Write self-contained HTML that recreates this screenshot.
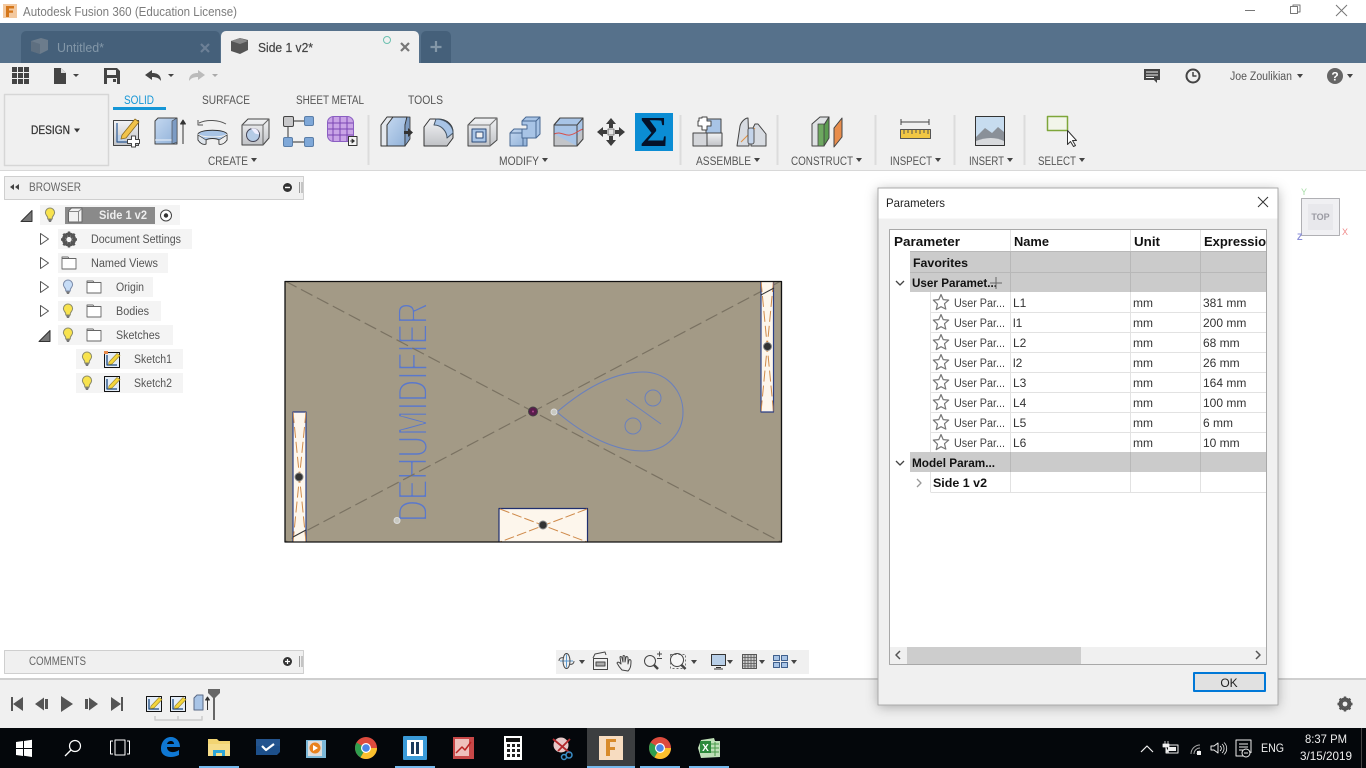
<!DOCTYPE html>
<html><head><meta charset="utf-8"><title>Autodesk Fusion 360</title>
<style>
html,body{margin:0;padding:0;background:#fff;width:1366px;height:768px;overflow:hidden}
svg{display:block;font-family:"Liberation Sans",sans-serif}
.r{font-size:11.5px;fill:#555}
.b{font-size:11.5px;fill:#555}
.h{font-size:13px;font-weight:bold;fill:#111}
</style></head><body>
<svg width="1366" height="768" viewBox="0 0 1366 768" xmlns="http://www.w3.org/2000/svg" stroke-linejoin="round">
<defs>
<filter id="sh" x="-10%" y="-10%" width="120%" height="120%"><feDropShadow dx="0" dy="2" stdDeviation="6" flood-color="#000" flood-opacity=".3"/></filter>
<clipPath id="tc"><rect x="890" y="230" width="377" height="434"/></clipPath>
<clipPath id="dc"><rect x="285" y="281" width="497" height="261"/></clipPath>
<clipPath id="pl"><rect x="293" y="412" width="13" height="130"/></clipPath>
<clipPath id="pr"><rect x="761" y="281" width="12.500" height="131"/></clipPath>
<linearGradient id="blu" x1="0" y1="0" x2="1" y2="1"><stop offset="0" stop-color="#c4d8f0"/><stop offset="1" stop-color="#8fb0d8"/></linearGradient>
<linearGradient id="gry" x1="0" y1="0" x2="0" y2="1"><stop offset="0" stop-color="#f2f3f5"/><stop offset="1" stop-color="#c0c2c6"/></linearGradient>
<symbol id="bulb" viewBox="0 0 12 16" width="12" height="16"><path d="M6 1a4.600 4.600 0 0 0-4.600 4.600c0 2 1.600 3 2.300 4.800v1.600h4.600v-1.600c.7-1.800 2.300-2.800 2.300-4.800A4.600 4.600 0 0 0 6 1z" fill="#f8e34e" stroke="#8a8a6a"/><path d="M4 12.500h4l-1 2.500H5z" fill="#777"/></symbol>
<symbol id="bulbb" viewBox="0 0 12 16" width="12" height="16"><path d="M6 1a4.600 4.600 0 0 0-4.600 4.600c0 2 1.600 3 2.300 4.800v1.600h4.600v-1.600c.7-1.800 2.300-2.800 2.300-4.800A4.600 4.600 0 0 0 6 1z" fill="#c6dcf6" stroke="#7a8aa8"/><path d="M4 12.500h4l-1 2.500H5z" fill="#777"/></symbol>
<symbol id="fold" viewBox="0 0 16 14" width="16" height="14"><path d="M1 2.500h14v10.500H1zM1 2.500V1h6l1 1.500" fill="#fff" stroke="#666" stroke-width=".9"/></symbol>
<symbol id="star" viewBox="0 0 18 18" width="18" height="18"><path d="M9 1.500l2.200 5.100 5.500.5-4.200 3.600 1.300 5.400L9 13.700l-4.800 2.900 1.300-5.400L1.300 7.100l5.500-.5z" fill="#fff" stroke="#777" stroke-width="1.200"/></symbol>
<symbol id="sk" viewBox="0 0 17 17" width="17" height="17"><rect x=".5" y="1.500" width="15" height="15" fill="#e4edf7" stroke="#111"/><path d="M3 4v10h10" fill="none" stroke="#1b4a80" stroke-width="1.300"/><path d="M5 11L13 2.500l3 2L8 13l-3.500.5z" fill="#f4d63c" stroke="#a08a30" stroke-width=".7"/></symbol>
</defs>

<!-- base -->
<rect width="1366" height="768" fill="#fff"/>
<!-- title bar -->
<rect x="3" y="4" width="14" height="14" fill="#f3c9a0"/><path d="M6 6h8v2.500H9v2h4v2.300H9V17H6z" fill="#d4761a"/>
<text x="23" y="16" font-size="12.500" fill="#7c7c7c" textLength="214" lengthAdjust="spacingAndGlyphs">Autodesk Fusion 360 (Education License)</text>
<path d="M1245 10.500h10" stroke="#777" stroke-width="1"/>
<path d="M1290.500 6.500h7v7h-7z M1293 6.500V5h7v7h-2.500" fill="none" stroke="#777"/>
<path d="M1336 5l11 11M1347 5l-11 11" stroke="#777" stroke-width="1"/>

<!-- tab bar -->
<rect y="23" width="1366" height="40" fill="#56718b"/>
<path d="M21 63V36a5 5 0 0 1 5-5h189a5 5 0 0 1 5 5v27z" fill="#45607a"/>
<path d="M221 63V36a5 5 0 0 1 5-5h188a5 5 0 0 1 5 5v27z" fill="#f0f0f0"/>
<path d="M421 63V36a5 5 0 0 1 5-5h20a5 5 0 0 1 5 5v27z" fill="#45607a"/>
<path d="M31 41l10-3 7 2v10l-8 4-9-3z" fill="#6c7c8c"/><path d="M31 41l9 3v10l-9-3z" fill="#5e6f80"/>
<text x="57" y="52" font-size="12.500" fill="#8397a8" textLength="47" lengthAdjust="spacingAndGlyphs">Untitled*</text>
<path d="M201 44l8 8M209 44l-8 8" stroke="#6c8096" stroke-width="2.200"/>
<path d="M231 41l9-3 8 2v10l-8 4-9-3z" fill="#555"/><path d="M231 41l9 3 8-3-8-3z" fill="#888"/>
<text x="258" y="52" font-size="12.500" fill="#444" stroke="#444" stroke-width=".2" textLength="55" lengthAdjust="spacingAndGlyphs">Side 1 v2*</text>
<circle cx="387" cy="40" r="3.500" fill="none" stroke="#6cc0b0" stroke-width="1"/>
<path d="M401 43l8 8M409 43l-8 8" stroke="#777" stroke-width="2.200"/>
<path d="M436 41v11M430.500 47h11" stroke="#8397a8" stroke-width="2.200"/>

<!-- toolbar -->
<rect y="63" width="1366" height="107" fill="#f0f0f0"/>
<rect y="170" width="1366" height="1" fill="#d8d8d8"/>
<g fill="#444"><rect x="12" y="67" width="5" height="5"/><rect x="18" y="67" width="5" height="5"/><rect x="24" y="67" width="5" height="5"/><rect x="12" y="73" width="5" height="5"/><rect x="18" y="73" width="5" height="5"/><rect x="24" y="73" width="5" height="5"/><rect x="12" y="79" width="5" height="5"/><rect x="18" y="79" width="5" height="5"/><rect x="24" y="79" width="5" height="5"/></g>
<path d="M54 68h7l5 5v11H54z" fill="#444"/><path d="M61 68v5h5" fill="#ddd"/>
<path d="M73 74h6l-3 3z" fill="#444"/>
<path d="M104 68h13l3 3v13h-16z" fill="#444"/><rect x="107" y="70" width="9" height="5" fill="#f0f0f0"/><rect x="107" y="78" width="10" height="6" fill="#f0f0f0"/><rect x="113" y="79" width="3" height="3" fill="#444"/>
<path d="M145 75l7-5v3c4 0 9 1 9 8-2-3-5-4-9-4v3z" fill="#444"/><path d="M168 74h6l-3 3z" fill="#444"/>
<path d="M205 75l-7-5v3c-4 0-9 1-9 8 2-3 5-4 9-4v3z" fill="#bbb"/><path d="M212 74h6l-3 3z" fill="#aaa"/>

<path d="M1144 69h16v11h-3v3l-3-3h-10z" fill="#444"/><path d="M1146 72h12M1146 75h12M1146 77.500h8" stroke="#f0f0f0" stroke-width="1"/>
<circle cx="1193" cy="76" r="6.500" fill="none" stroke="#444" stroke-width="2"/><path d="M1193 72v4h3.500" fill="none" stroke="#444" stroke-width="1.500"/>
<text x="1230" y="80" font-size="11.500" fill="#555" textLength="62" lengthAdjust="spacingAndGlyphs">Joe Zoulikian</text>
<path d="M1297 74h6l-3 4z" fill="#444"/>
<circle cx="1335" cy="76" r="8" fill="#666"/><text x="1335" y="80.500" font-size="12" font-weight="bold" fill="#fff" text-anchor="middle">?</text>
<path d="M1347 74h6l-3 4z" fill="#444"/>

<!-- design -->
<rect x="4.500" y="94.500" width="104" height="71" fill="#f0f0f0" stroke="#d6d6d6" stroke-width="1.500"/>
<text x="31" y="134" font-size="11.500" fill="#333" stroke="#333" stroke-width=".25" textLength="39" lengthAdjust="spacingAndGlyphs">DESIGN</text>
<path d="M74 128.500h6l-3 4z" fill="#333"/>

<!-- ribbon tabs -->
<text x="124" y="104" font-size="11.500" fill="#1596d6" textLength="30" lengthAdjust="spacingAndGlyphs">SOLID</text>
<rect x="113" y="107" width="53" height="3" fill="#1596d6"/>
<text x="202" y="104" class="r" textLength="48" lengthAdjust="spacingAndGlyphs">SURFACE</text>
<text x="296" y="104" class="r" textLength="68" lengthAdjust="spacingAndGlyphs">SHEET METAL</text>
<text x="408" y="104" class="r" textLength="35" lengthAdjust="spacingAndGlyphs">TOOLS</text>

<!-- group labels -->
<g>
<text x="208" y="165" class="b" textLength="40" lengthAdjust="spacingAndGlyphs">CREATE</text><path d="M251 158h6l-3 4z" fill="#444"/>
<text x="499" y="165" class="b" textLength="40" lengthAdjust="spacingAndGlyphs">MODIFY</text><path d="M542 158h6l-3 4z" fill="#444"/>
<text x="696" y="165" class="b" textLength="55" lengthAdjust="spacingAndGlyphs">ASSEMBLE</text><path d="M754 158h6l-3 4z" fill="#444"/>
<text x="791" y="165" class="b" textLength="62" lengthAdjust="spacingAndGlyphs">CONSTRUCT</text><path d="M856 158h6l-3 4z" fill="#444"/>
<text x="890" y="165" class="b" textLength="42" lengthAdjust="spacingAndGlyphs">INSPECT</text><path d="M935 158h6l-3 4z" fill="#444"/>
<text x="969" y="165" class="b" textLength="35" lengthAdjust="spacingAndGlyphs">INSERT</text><path d="M1007 158h6l-3 4z" fill="#444"/>
<text x="1038" y="165" class="b" textLength="38" lengthAdjust="spacingAndGlyphs">SELECT</text><path d="M1079 158h6l-3 4z" fill="#444"/>
</g>
<g fill="#dcdcdc"><rect x="367.500" y="115" width="2" height="50"/><rect x="679.500" y="115" width="2" height="50"/><rect x="776.500" y="115" width="2" height="50"/><rect x="874.500" y="115" width="2" height="50"/><rect x="953.500" y="115" width="2" height="50"/><rect x="1023.500" y="115" width="2" height="50"/></g>

<!-- CREATE icons -->
<rect x="113.500" y="120.500" width="25" height="25" fill="url(#gry)" stroke="#444"/>
<path d="M117 123v19h13" fill="none" stroke="#2a5a96" stroke-width="1.200"/><rect x="118" y="135" width="6" height="6" fill="#bcd2ec"/>
<path d="M122 135l13-16 4 3-13 16-5 1z" fill="#f1c34a" stroke="#8c6a1e" stroke-width=".8"/>
<path d="M131.500 136h4v3.500h4v4h-4v3.500h-4v-3.500h-4v-4h4z" fill="#fff" stroke="#444"/>
<path d="M155 121l3-3h19v26h-22z" fill="url(#blu)" stroke="#444"/><path d="M155 140h17" stroke="#eef3fa" fill="none"/><path d="M172 144l5-2V118l-5 3z" fill="#7d9cc4" stroke="#444" stroke-width=".6"/>
<path d="M183 144v-23M180.500 124l2.500-4 2.500 4z" stroke="#333" fill="#333"/>
<path d="M199 123c8-4 20-3 27 1M198 120v5h5" fill="none" stroke="#555" stroke-width="1"/>
<path d="M198 134c2-5 27-5 29 0v6c-2 3-6 5-8 4v-4c-3-2-10-2-13 0v4c-3 1-6-1-8-4z" fill="#a8c4e6" stroke="#333" stroke-width="1"/><path d="M198 134c3 4 26 4 29 0" fill="none" stroke="#eee"/><path d="M219 140l8-5v5c-2 3-5 5-8 4z" fill="#eee" stroke="#333" stroke-width=".7"/><path d="M198 135v5c2 3 5 5 8 4v-4z" fill="#dfe5ec" stroke="#333" stroke-width=".7"/>
<path d="M242 125l6-6h21v19l-6 7h-21z" fill="url(#gry)" stroke="#444"/><path d="M263 145v-20l6-6M263 125h-21" fill="none" stroke="#666"/><circle cx="253" cy="135" r="6.500" fill="#b5cbe6" stroke="#445"/><path d="M251 128.500a6 6 0 0 1 8 6l-4-1z" fill="#eef"/>
<path d="M293 121h11M288 126v11M293 142h11" stroke="#555" stroke-width="1.200"/>
<rect x="283.500" y="116.500" width="10" height="10" rx="1.500" fill="#c8c8ca" stroke="#444"/><rect x="304.500" y="116.500" width="9" height="9" rx="1.500" fill="#7fa8d8" stroke="#5a7ea8"/><rect x="283.500" y="137.500" width="9" height="9" rx="1.500" fill="#7fa8d8" stroke="#5a7ea8"/><rect x="304.500" y="137.500" width="9" height="9" rx="1.500" fill="#7fa8d8" stroke="#5a7ea8"/>
<rect x="327.500" y="116.500" width="26" height="25" rx="6" fill="#c9a4e6" stroke="#8a5ec2"/><path d="M333 117v24M340 117v24M347 117v24M328 123h25M328 129h25M328 135h25" stroke="#7a46b4" stroke-width="1"/>
<rect x="348.500" y="136.500" width="8.500" height="9" fill="#f4f4f4" stroke="#333"/><path d="M350 141h3M352 139l2.500 2-2.500 2z" stroke="#333" fill="#333" stroke-width=".8"/>

<!-- MODIFY -->
<path d="M381 125l6-8h20l-2 8v21h-24z" fill="#e4e8ee" stroke="#333"/><path d="M387 125l6-8h14l-2 8v21h-18z" fill="url(#blu)" stroke="#333"/><path d="M405 125v21l5-7v-22l-3 0z" fill="#7e9cc2" stroke="#333" stroke-width=".8"/><path d="M404 131h4v-3l5 4.500-5 4.500v-3h-4z" fill="#333"/>
<path d="M424 127l6-8h8c9 0 15 6 15 13v6l-6 8h-23z" fill="url(#gry)" stroke="#333"/><path d="M436 119c10 0 17 7 17 14l-6 5c0-6-5-13-13-13z" fill="#a8c4e6" stroke="#456"/>
<path d="M468 125l7-7h22v22l-7 6h-22z" fill="url(#gry)" stroke="#444"/><path d="M490 146v-21l7-7M490 125h-22" fill="none" stroke="#777"/><rect x="472" y="129" width="14" height="13" fill="#a8c4e6" stroke="#2c4a78"/><rect x="476" y="132" width="7" height="6" fill="#f0f0f0" stroke="#2c4a78"/>
<path d="M510 133l4-4h13v17h-17z" fill="url(#blu)" stroke="#4a6a94"/><path d="M510 133h13v13M523 133l4-4" fill="none" stroke="#4a6a94"/>
<path d="M522 121l4-4h14v17l-4 4h-14v-9h5v-4h-5z" fill="#a8c4e6" stroke="#4a6a94"/><path d="M522 121h14v17M536 121l4-4" fill="none" stroke="#4a6a94"/>
<path d="M554 125l6-7h23v21l-6 7h-23z" fill="#a8c4e6" stroke="#444"/><path d="M554 134v12h23v-9l6-8v10l-6 7z" fill="#c2c4c8"/><path d="M554 125h23v21M577 125l6-7" fill="none" stroke="#444"/><path d="M554 134c8-3 10 2 16 1s7-4 13-6" fill="none" stroke="#d8504a" stroke-width="1"/><path d="M554 125l6-7h23v21l-6 7h-23z" fill="none" stroke="#444"/>
<path d="M611 118l5 6h-3v4h-4v-4h-3zM611 146l5-6h-3v-4h-4v4h-3zM597 132l6-5v3h4v4h-4v3zM625 132l-6-5v3h-4v4h4v3z" fill="#3c3c3c"/><rect x="608" y="129" width="6" height="6" fill="#e4e4e4" stroke="#555" stroke-width=".8"/>
<rect x="635" y="113" width="38" height="38" fill="#0b8dd4"/>
<text x="654" y="146" font-size="42" font-family="'Liberation Serif',serif" font-weight="bold" fill="#04122a" text-anchor="middle">Σ</text>

<!-- ASSEMBLE -->
<path d="M706 133v-14h15v14z" fill="#a8c4e6" stroke="#444"/><path d="M693 133h14v13h-14z" fill="#d4d6da" stroke="#444"/><path d="M707 133h15v13h-15z" fill="url(#gry)" stroke="#444"/><path d="M699 118h3v-1h5v4h4v5h-4v4h-5v-4h-4v-5h1z" fill="#fff" stroke="#444"/>
<path d="M737 146l3-20c1-4 5-8 8-8l1 28h-6zM751 146v-14l4-8h3l8 10v12h-8z" fill="#d8dce2" stroke="#444"/><path d="M741 142c4-4 8-8 14-14" stroke="#e09040" fill="none"/><rect x="748" y="128" width="6" height="16" rx="2" fill="#c4d4ea" stroke="#555"/>

<!-- CONSTRUCT -->
<path d="M812 124l8-7h9l-5 8v21h-12z" fill="#dfe2e4" stroke="#444"/><path d="M824 125l5-8v21l-5 8z" fill="#5b9c50" stroke="#444"/><path d="M818 124h6v22h-6z" fill="#6ea860" stroke="#444" stroke-width=".8"/><path d="M834 128l8-10v19l-8 10z" fill="#e88d4c" stroke="#444"/>

<!-- INSPECT -->
<path d="M901 122h28M901 119v6M929 119v6" stroke="#444" fill="none"/><rect x="900.500" y="129.500" width="30" height="9" fill="#f2c744" stroke="#555"/><path d="M904 130v4M908 130v3M912 130v4M916 130v3M920 130v4M924 130v3M928 130v4" stroke="#555"/>

<!-- INSERT -->
<rect x="975.500" y="116.500" width="29" height="29" fill="#c7dcef" stroke="#333"/><path d="M976 137l9-9 7 5 6-6 6 5v13h-28z" fill="#8a9098"/><path d="M976 141c10-4 20-4 28 0v4h-28z" fill="#d8dadd"/>

<!-- SELECT -->
<rect x="1047.500" y="116.500" width="20" height="14" fill="#f2f5ea" stroke="#7ea63a" stroke-width="1.500"/>
<path d="M1067.500 130.500v14l3-3 3 5 2-1-3-5h4z" fill="#fff" stroke="#333" stroke-width="1"/>

<!-- BROWSER -->
<rect x="4.500" y="176.500" width="299" height="23" fill="#f0f0f0" stroke="#cfcfcf"/>
<path d="M14 184v6l-4-3zM19 184v6l-4-3z" fill="#444"/>
<text x="29" y="191" font-size="11.500" fill="#666" textLength="52" lengthAdjust="spacingAndGlyphs">BROWSER</text>
<circle cx="287.500" cy="187.500" r="4.500" fill="#333"/><rect x="285" y="186.800" width="5" height="1.400" fill="#fff"/>
<path d="M299.500 182v11M302 182v11" stroke="#999"/>

<!-- tree -->
<g fill="#f4f4f4">
<rect x="40" y="205" width="140" height="20"/><rect x="58" y="229" width="134" height="20"/><rect x="58" y="253" width="110" height="20"/><rect x="58" y="277" width="95" height="20"/><rect x="58" y="301" width="103" height="20"/><rect x="58" y="325" width="115" height="20"/><rect x="76" y="349" width="107" height="20"/><rect x="76" y="373" width="107" height="20"/>
</g>
<path d="M21 221.500l11-11v11z" fill="#777" stroke="#333"/>
<use href="#bulb" x="44" y="207"/>
<rect x="65" y="207" width="90" height="17" fill="#8a8a8a"/>
<path d="M68.500 211l3-3h10.500v14h-13.500z" fill="#f2f2f2" stroke="#666"/><path d="M78.500 222v-10.500l3.500-3M68.500 211.500h10" fill="none" stroke="#888"/>
<text x="99" y="219" font-size="11.500" font-weight="bold" fill="#eee" textLength="48" lengthAdjust="spacingAndGlyphs">Side 1 v2</text>
<circle cx="166" cy="215.500" r="5.500" fill="#fff" stroke="#444"/><circle cx="166" cy="215.500" r="2.200" fill="#333"/>

<path d="M40.500 233.500l8 5.500-8 5.500z" fill="#fff" stroke="#555"/>
<g transform="translate(69 239.500)"><circle r="5.500" fill="none" stroke="#555" stroke-width="3"/><path d="M0-8V8M-8 0H8M-5.700-5.700L5.700 5.700M-5.700 5.700L5.700-5.700" stroke="#555" stroke-width="2.400"/><circle r="2.600" fill="#f4f4f4"/></g>
<text x="91" y="243" class="r" textLength="90" lengthAdjust="spacingAndGlyphs">Document Settings</text>

<path d="M40.500 257.500l8 5.500-8 5.500z" fill="#fff" stroke="#555"/>
<use href="#fold" x="61" y="256"/>
<text x="91" y="267" class="r" textLength="67" lengthAdjust="spacingAndGlyphs">Named Views</text>

<path d="M40.500 281.500l8 5.500-8 5.500z" fill="#fff" stroke="#555"/>
<use href="#bulbb" x="62" y="279"/><use href="#fold" x="86" y="280"/>
<text x="116" y="291" class="r" textLength="28" lengthAdjust="spacingAndGlyphs">Origin</text>

<path d="M40.500 305.500l8 5.500-8 5.500z" fill="#fff" stroke="#555"/>
<use href="#bulb" x="62" y="303"/><use href="#fold" x="86" y="304"/>
<text x="116" y="315" class="r" textLength="33" lengthAdjust="spacingAndGlyphs">Bodies</text>

<path d="M39 341.500l11-11v11z" fill="#777" stroke="#333"/>
<use href="#bulb" x="62" y="327"/><use href="#fold" x="86" y="328"/>
<text x="116" y="339" class="r" textLength="44" lengthAdjust="spacingAndGlyphs">Sketches</text>

<use href="#bulb" x="81" y="351"/><use href="#sk" x="104" y="351"/><path d="M104 351h4v3h-4z" fill="#e88a4a"/>
<text x="134" y="363" class="r" textLength="38" lengthAdjust="spacingAndGlyphs">Sketch1</text>
<use href="#bulb" x="81" y="375"/><use href="#sk" x="104" y="375"/>
<text x="134" y="387" class="r" textLength="38" lengthAdjust="spacingAndGlyphs">Sketch2</text>

<!-- DRAWING -->
<g clip-path="url(#dc)">
<rect x="285" y="281" width="497" height="261" fill="#a39a86"/>
<text transform="translate(427 522) rotate(-90)" font-size="42" fill="#5a78cc" stroke="#a39a86" stroke-width="1.900" textLength="220" lengthAdjust="spacingAndGlyphs">DEHUMIDIFIER</text>
<path d="M285 281L781 542M781 281L285 542" stroke="#7a7262" stroke-width="1.200" stroke-dasharray="13 5" fill="none"/>
<path d="M557 412C585 388 615 372 643 372C668 372 683 392 683 412C683 432 668 451 643 451C615 451 585 436 557 412Z" fill="none" stroke="#6a80bd" stroke-width="1.100"/>
<circle cx="653" cy="398" r="8" fill="none" stroke="#6a80bd"/><circle cx="633" cy="426" r="8" fill="none" stroke="#6a80bd"/><path d="M626 399L661 424" stroke="#6a80bd"/>

<rect x="293" y="412" width="13" height="132" fill="#fdf6ec" stroke="#2b3f86" stroke-width="1.200"/>
<g clip-path="url(#pl)"><path d="M293 412L306 542M306 412L293 542" stroke="#cf8a4a" stroke-width="1" stroke-dasharray="11 4" fill="none"/></g>
<path d="M293 537l13-7" stroke="#333"/>
<circle cx="299" cy="477" r="4" fill="#333" stroke="#888"/>

<rect x="761" y="279" width="12.500" height="133" fill="#fdf6ec" stroke="#2b3f86" stroke-width="1.200"/>
<g clip-path="url(#pr)"><path d="M761 281L773.500 412M773.500 281L761 412" stroke="#cf8a4a" stroke-width="1" stroke-dasharray="11 4" fill="none"/></g>
<path d="M761 295l13-7" stroke="#333"/>
<circle cx="767.500" cy="346.500" r="4" fill="#333" stroke="#888"/>

<rect x="499" y="508.500" width="88.500" height="36" fill="#fdf6ec" stroke="#1f2f70" stroke-width="1.200"/>
<path d="M500 509L587 542M587 509L500 542" stroke="#cf8a4a" stroke-width="1" stroke-dasharray="10 3" fill="none"/>
<circle cx="543" cy="525" r="4" fill="#333" stroke="#888"/>
</g>
<rect x="285" y="281.500" width="496.500" height="260.500" fill="none" stroke="#111" stroke-width="1.300"/>
<circle cx="533" cy="411.500" r="4.500" fill="#5a1c4c" stroke="#444"/><circle cx="533" cy="411.500" r="1" fill="#b04890"/>
<circle cx="554" cy="412" r="3" fill="#c8c8c0" stroke="#ddd"/>
<circle cx="397" cy="520.500" r="3" fill="#c8c8c0" stroke="#ddd"/>

<!-- view cube -->
<rect x="1301.500" y="198.500" width="38" height="37" fill="#f0f0f3" stroke="#b0b0b4"/>
<rect x="1308" y="204" width="25" height="26" fill="#e8e8ec"/>
<text x="1320.500" y="220" font-size="9" font-weight="bold" fill="#9a9aa2" text-anchor="middle">TOP</text>
<text x="1301" y="195" font-size="9" fill="#a6dca6">Y</text>
<text x="1297" y="240" font-size="9" font-weight="bold" fill="#8a8ed8">Z</text>
<text x="1342" y="235" font-size="9" fill="#f08a8a">X</text>

<!-- nav bar -->
<rect x="556" y="650" width="253" height="24" fill="#f0f0f0"/>
<g fill="none" stroke="#444" stroke-width="1">
<path d="M560 661h13M566.500 654.500v13" stroke="#5b9ad0"/><ellipse cx="566.500" cy="661" rx="3.500" ry="7.500"/><path d="M559 661c0-3 3-4 5-3M574 661c0 3-3 4-5 3" stroke="#555"/>
<rect x="593.500" y="658.500" width="14" height="11"/><path d="M593 658l2-4 10-2 1 3"/><rect x="596" y="662" width="9" height="4" fill="#aaa"/>
<path d="M622 670c-2-2-4-5-5-7 1-2 3 0 4 1l-1-7c1-1 2 0 2 1l1 4 0-6c1-1 2 0 2 1v5l1-5c1-1 2 0 2 1v6l1-4c1-1 2 0 2 1 0 6-1 8-3 10z"/>
<circle cx="650" cy="661" r="5.500"/><path d="M654 665l4 4" stroke-width="2.500"/><path d="M657 654h5M659.500 651.500v5M657 658.500h5" stroke-width=".9"/>
<circle cx="677" cy="660" r="6.500" fill="#f6f6f6"/><path d="M681.500 665l4 4" stroke-width="2.500"/><rect x="670.500" y="654.500" width="15" height="14" stroke-dasharray="2 2" stroke-width=".7"/>
</g>
<rect x="711.500" y="654.500" width="14" height="11" fill="#b8cfe8" stroke="#333"/><path d="M716 667.500h5M714 669h9" stroke="#333"/>
<rect x="742.500" y="654.500" width="14" height="14" fill="#ccc" stroke="#555"/><path d="M745 655v13M748 655v13M751 655v13M754 655v13M743 657.500h13M743 660.500h13M743 663.500h13M743 666h13" stroke="#555" stroke-width=".8"/>
<g fill="#a8c4e6" stroke="#3f5f8c"><rect x="773.500" y="655.500" width="6" height="5"/><rect x="781.500" y="655.500" width="6" height="5"/><rect x="773.500" y="662.500" width="6" height="5"/><rect x="781.500" y="662.500" width="6" height="5"/></g>
<g fill="#444"><path d="M579 660h6l-3 4zM691 660h6l-3 4zM727 660h6l-3 4zM759 660h6l-3 4zM791 660h6l-3 4z"/></g>

<!-- comments -->
<rect x="4.500" y="650.500" width="299" height="23" fill="#f0f0f0" stroke="#cfcfcf"/>
<text x="29" y="665" font-size="11.500" fill="#666" textLength="57" lengthAdjust="spacingAndGlyphs">COMMENTS</text>
<circle cx="287.500" cy="661.500" r="4.500" fill="#333"/><path d="M285 661.500h5M287.500 659v5" stroke="#fff" stroke-width="1.200"/>
<path d="M299.500 656v11M302 656v11" stroke="#999"/>

<!-- timeline -->
<rect y="678" width="1366" height="2" fill="#cfcfcf"/>
<rect y="680" width="1366" height="48" fill="#f0f0f0"/>
<g fill="#555">
<rect x="11" y="697" width="2" height="14"/><path d="M23 697v14l-10-7z"/>
<path d="M35 704l9-6.500v13zM45 699h3v10h-3z"/>
<path d="M61 696l12 8-12 8z"/>
<path d="M98 704l-9-6.500v13zM85 699h3v10h-3z"/>
<path d="M111 697l10 7-10 7z"/><rect x="121" y="697" width="2" height="14"/>
</g>
<use href="#sk" x="146" y="695"/><use href="#sk" x="170" y="695"/>
<path d="M194 698l3-3h6v15h-9z" fill="#a8c4e6" stroke="#5a6a86"/><path d="M207.500 710v-12M205.500 700l2-3 2 3z" stroke="#333" fill="#333"/>
<path d="M155 716v4h47v-4M178 716v4" fill="none" stroke="#ccc" stroke-width="1.500"/>
<path d="M208 689h12v4l-6 6-6-6z" fill="#666"/><rect x="213" y="696" width="2" height="24" fill="#666"/>
<g transform="translate(1345 704)"><circle r="5" fill="none" stroke="#555" stroke-width="3"/><path d="M0-7.500V7.500M-7.500 0H7.500M-5.300-5.300L5.300 5.300M-5.300 5.300L5.300-5.300" stroke="#555" stroke-width="2.400"/><circle r="2.400" fill="#f0f0f0"/></g>

<!-- taskbar -->
<rect y="728" width="1366" height="40" fill="#04070b"/>
<g fill="#fff"><path d="M16 742l7-1v7h-7zM24 741l8-1.300V748h-8zM16 749h7v7l-7-1zM24 749h8v8l-8-1.300z"/></g>
<circle cx="75" cy="746" r="5.500" fill="none" stroke="#fff" stroke-width="1.200"/><path d="M71 750l-6 6" stroke="#fff" stroke-width="1.300"/>
<path d="M113 741h-2.500v13h2.500M127 741h2.500v13H127" fill="none" stroke="#fff" stroke-width="1"/><rect x="115" y="740" width="10" height="15" fill="none" stroke="#fff"/>
<path d="M161 749c0-7 4-12 10-12 5 0 9 4 9 10h-13c0 5 6 7 12 3v5c-8 4-18 2-18-6zm6-5h7c0-4-6-4-7 0z" fill="#0f78d4"/>
<path d="M208 739h9l2 2h11v15h-22z" fill="#f2d472"/><rect x="208" y="744" width="22" height="12" fill="#f6dd8a"/><path d="M213 750h12v6h-3v-3h-6v3h-3z" fill="#2ea6d8"/>
<rect x="199" y="766" width="40" height="2" fill="#76b9ed"/>
<path d="M256 742l3-3h21v13l-3 3h-21z" fill="#1d4f8a"/><rect x="256" y="739" width="24" height="7" fill="#24548e"/><path d="M262 746l4 4 8-6" fill="none" stroke="#fff" stroke-width="2.200"/>
<rect x="306" y="740" width="20" height="18" fill="#7cb8d8"/><rect x="308" y="741" width="14" height="15" fill="#ddd"/><circle cx="315" cy="748" r="5.500" fill="#e8821e"/><path d="M313 745l5 3-5 3z" fill="#fff"/>
<circle cx="366" cy="748" r="11" fill="#dd4b3e"/><path d="M366 748l-5.500 9.500A11 11 0 0 1 356.500 742.500z" fill="#2f9e4f"/><path d="M366 748h11A11 11 0 0 1 360.500 757.500z" fill="#fbc02d"/><circle cx="366" cy="748" r="5" fill="#fff"/><circle cx="366" cy="748" r="3.800" fill="#4a86e8"/>
<rect x="403" y="736" width="24" height="24" rx="1" fill="#3a9ad8"/><rect x="407" y="740" width="16" height="16" fill="#fff"/><path d="M411 742h3v12h-3zM416 742h3v12h-3z" fill="#1a3a5c"/>
<rect x="395" y="766" width="40" height="2" fill="#76b9ed"/>
<rect x="453" y="737" width="21" height="22" fill="#c84848"/><rect x="455" y="739" width="14" height="17" fill="#eec0bc"/><path d="M456 753l6-6 3 3 6-8" fill="none" stroke="#b22" stroke-width="1.500"/>
<rect x="504" y="736" width="18" height="24" fill="#fff"/><rect x="506" y="738" width="14" height="4" fill="#111"/><g fill="#222"><rect x="507" y="744" width="3" height="3"/><rect x="512" y="744" width="3" height="3"/><rect x="517" y="744" width="3" height="3"/><rect x="507" y="749" width="3" height="3"/><rect x="512" y="749" width="3" height="3"/><rect x="517" y="749" width="3" height="3"/><rect x="507" y="754" width="3" height="3"/><rect x="512" y="754" width="3" height="3"/><rect x="517" y="754" width="3" height="3"/></g>
<circle cx="561" cy="745" r="7.500" fill="#e8c8c8"/><path d="M553 739l17 14M570 739l-12 12" stroke="#b2282c" stroke-width="1.800"/><circle cx="569" cy="755" r="3" fill="none" stroke="#3a8ec8" stroke-width="1.500"/><circle cx="564" cy="757" r="2.500" fill="none" stroke="#3a8ec8" stroke-width="1.500"/>
<rect x="587" y="728" width="48" height="40" fill="#3c3e40"/>
<rect x="599" y="736" width="24" height="24" fill="#f7dcc0"/><path d="M606 739h10v3h-6v5h5v3h-5v6h-4z" fill="#d88a2a"/>
<rect x="587" y="766" width="48" height="2" fill="#76b9ed"/>
<circle cx="660" cy="748" r="11" fill="#dd4b3e"/><path d="M660 748l-5.500 9.500A11 11 0 0 1 650.500 742.500z" fill="#2f9e4f"/><path d="M660 748h11A11 11 0 0 1 654.500 757.500z" fill="#fbc02d"/><circle cx="660" cy="748" r="5" fill="#fff"/><circle cx="660" cy="748" r="3.800" fill="#4a86e8"/>
<rect x="640" y="766" width="40" height="2" fill="#76b9ed"/>
<path d="M701 740l13-2 1 3h5l0 16-19 1-3-10z" fill="#bfe0b8"/><path d="M700 741h11v12h-11z" fill="#2c8a3c"/><text x="705.500" y="751" font-size="10" font-weight="bold" fill="#fff" text-anchor="middle">X</text><path d="M711 744h8M711 748h8M711 752h8M715 742v14" stroke="#4a9a4a"/>
<rect x="689" y="766" width="40" height="2" fill="#76b9ed"/>

<!-- tray -->
<path d="M1141 752l6-6 6 6" fill="none" stroke="#eee" stroke-width="1.200"/>
<rect x="1166" y="745" width="12" height="8" fill="none" stroke="#eee"/><rect x="1168" y="747" width="8" height="4" fill="#eee"/><path d="M1163 744h6v3h-6zM1165 741v3M1168 741v3M1166 747v5h3" fill="#eee" stroke="#eee" stroke-width=".8"/>
<path d="M1191 754a9 9 0 0 1 9-9M1194 754a6 6 0 0 1 6-6M1197 754a3 3 0 0 1 3-3" fill="none" stroke="#aaa"/><rect x="1197" y="751" width="4" height="4" fill="#eee"/>
<path d="M1211 746h3l4-3v10l-4-3h-3z" fill="none" stroke="#eee"/><path d="M1220 746a3 3 0 0 1 0 5M1222 744a6 6 0 0 1 0 9M1224 742.500a8 8 0 0 1 0 12" fill="none" stroke="#eee" stroke-width=".8"/>
<path d="M1251 753v-13h-15v16h9M1239 744h9M1239 747h9M1239 750h6" fill="none" stroke="#eee"/><circle cx="1246" cy="753" r="4" fill="#04070b" stroke="#eee"/><path d="M1244 753h4" stroke="#eee"/>
<text x="1261" y="752" font-size="12" fill="#eee" textLength="23" lengthAdjust="spacingAndGlyphs">ENG</text>
<text x="1326" y="743" font-size="12" fill="#eee" text-anchor="middle" textLength="42" lengthAdjust="spacingAndGlyphs">8:37 PM</text>
<text x="1326" y="760" font-size="12" fill="#eee" text-anchor="middle" textLength="52" lengthAdjust="spacingAndGlyphs">3/15/2019</text>
<rect x="1361" y="728" width="1" height="40" fill="#444"/>

<!-- DIALOG -->
<rect x="878" y="188" width="400" height="517" fill="#f0f0f0" filter="url(#sh)"/>
<rect x="878.500" y="188.500" width="399" height="30" fill="#fff"/>
<rect x="878" y="188" width="400" height="517" fill="none" stroke="#ababab"/>
<text x="886" y="207" font-size="12" fill="#222" textLength="59" lengthAdjust="spacingAndGlyphs">Parameters</text>
<path d="M1258 197l10 10M1268 197l-10 10" stroke="#333" stroke-width="1"/>

<rect x="889.500" y="229.500" width="377" height="435" fill="#fff"/>
<g clip-path="url(#tc)">
<rect x="910" y="252" width="357" height="40" fill="#cbcbcb"/>
<rect x="910" y="452" width="357" height="20" fill="#cbcbcb"/>
<g stroke="#e2e2e2"><path d="M930.500 312.500H1267M930.500 332.500H1267M930.500 352.500H1267M930.500 372.500H1267M930.500 392.500H1267M930.500 412.500H1267M930.500 432.500H1267M930.500 492.500H1267M1010.500 230V492M1130.500 230V492M1200.500 230V492M930.500 292V452M930.500 472V492"/></g>
<g stroke="#b8b8b8"><path d="M910 272.500H1267M910 251.500H1267M1010.500 252V292M1130.500 252V292M1200.500 252V292M1010.500 452V472M1130.500 452V472M1200.500 452V472"/></g>
<text x="894" y="246" class="h" textLength="66" lengthAdjust="spacingAndGlyphs">Parameter</text>
<text x="1014" y="246" class="h" textLength="35" lengthAdjust="spacingAndGlyphs">Name</text>
<text x="1134" y="246" class="h" textLength="26" lengthAdjust="spacingAndGlyphs">Unit</text>
<text x="1204" y="246" class="h" textLength="70" lengthAdjust="spacingAndGlyphs">Expression</text>
<text x="913" y="267" font-size="12" font-weight="bold" fill="#111" textLength="55" lengthAdjust="spacingAndGlyphs">Favorites</text>
<text x="912" y="287" font-size="12" font-weight="bold" fill="#111" textLength="85" lengthAdjust="spacingAndGlyphs">User Paramet...</text>
<path d="M996 277v12M990 283h12" stroke="#666"/>
<path d="M896 281l4 4 4-4" fill="none" stroke="#444" stroke-width="1.300"/>
<g>
<use href="#star" x="932" y="293"/><use href="#star" x="932" y="313"/><use href="#star" x="932" y="333"/><use href="#star" x="932" y="353"/><use href="#star" x="932" y="373"/><use href="#star" x="932" y="393"/><use href="#star" x="932" y="413"/><use href="#star" x="932" y="433"/>
</g>
<g font-size="11.500" fill="#444">
<text x="954" y="307" textLength="51" lengthAdjust="spacingAndGlyphs">User Par...</text><text x="954" y="327" textLength="51" lengthAdjust="spacingAndGlyphs">User Par...</text><text x="954" y="347" textLength="51" lengthAdjust="spacingAndGlyphs">User Par...</text><text x="954" y="367" textLength="51" lengthAdjust="spacingAndGlyphs">User Par...</text><text x="954" y="387" textLength="51" lengthAdjust="spacingAndGlyphs">User Par...</text><text x="954" y="407" textLength="51" lengthAdjust="spacingAndGlyphs">User Par...</text><text x="954" y="427" textLength="51" lengthAdjust="spacingAndGlyphs">User Par...</text><text x="954" y="447" textLength="51" lengthAdjust="spacingAndGlyphs">User Par...</text>
</g>
<g font-size="12" fill="#333">
<text x="1013" y="307">L1</text><text x="1133" y="307">mm</text><text x="1203" y="307">381 mm</text>
<text x="1013" y="327">l1</text><text x="1133" y="327">mm</text><text x="1203" y="327">200 mm</text>
<text x="1013" y="347">L2</text><text x="1133" y="347">mm</text><text x="1203" y="347">68 mm</text>
<text x="1013" y="367">l2</text><text x="1133" y="367">mm</text><text x="1203" y="367">26 mm</text>
<text x="1013" y="387">L3</text><text x="1133" y="387">mm</text><text x="1203" y="387">164 mm</text>
<text x="1013" y="407">L4</text><text x="1133" y="407">mm</text><text x="1203" y="407">100 mm</text>
<text x="1013" y="427">L5</text><text x="1133" y="427">mm</text><text x="1203" y="427">6 mm</text>
<text x="1013" y="447">L6</text><text x="1133" y="447">mm</text><text x="1203" y="447">10 mm</text>
</g>
<path d="M896 461l4 4 4-4" fill="none" stroke="#444" stroke-width="1.300"/>
<text x="912" y="467" font-size="12" font-weight="bold" fill="#111" textLength="83" lengthAdjust="spacingAndGlyphs">Model Param...</text>
<path d="M917 479l4 4-4 4" fill="none" stroke="#999" stroke-width="1.300"/>
<text x="933" y="487" font-size="12" font-weight="bold" fill="#111" textLength="54" lengthAdjust="spacingAndGlyphs">Side 1 v2</text>
<rect x="890" y="647" width="377" height="17" fill="#f0f0f0"/>
<rect x="907" y="647" width="174" height="17" fill="#cdcdcd"/>
<path d="M900 651l-4 4 4 4M1256 651l4 4-4 4" fill="none" stroke="#555" stroke-width="1.500"/>
</g>
<rect x="889.500" y="229.500" width="377" height="435" fill="none" stroke="#a8a8a8"/>
<rect x="1194" y="673" width="71" height="18" fill="#e1e1e1" stroke="#0078d7" stroke-width="2"/>
<text x="1229" y="687" font-size="12" fill="#222" text-anchor="middle">OK</text>
</svg>
</body></html>
